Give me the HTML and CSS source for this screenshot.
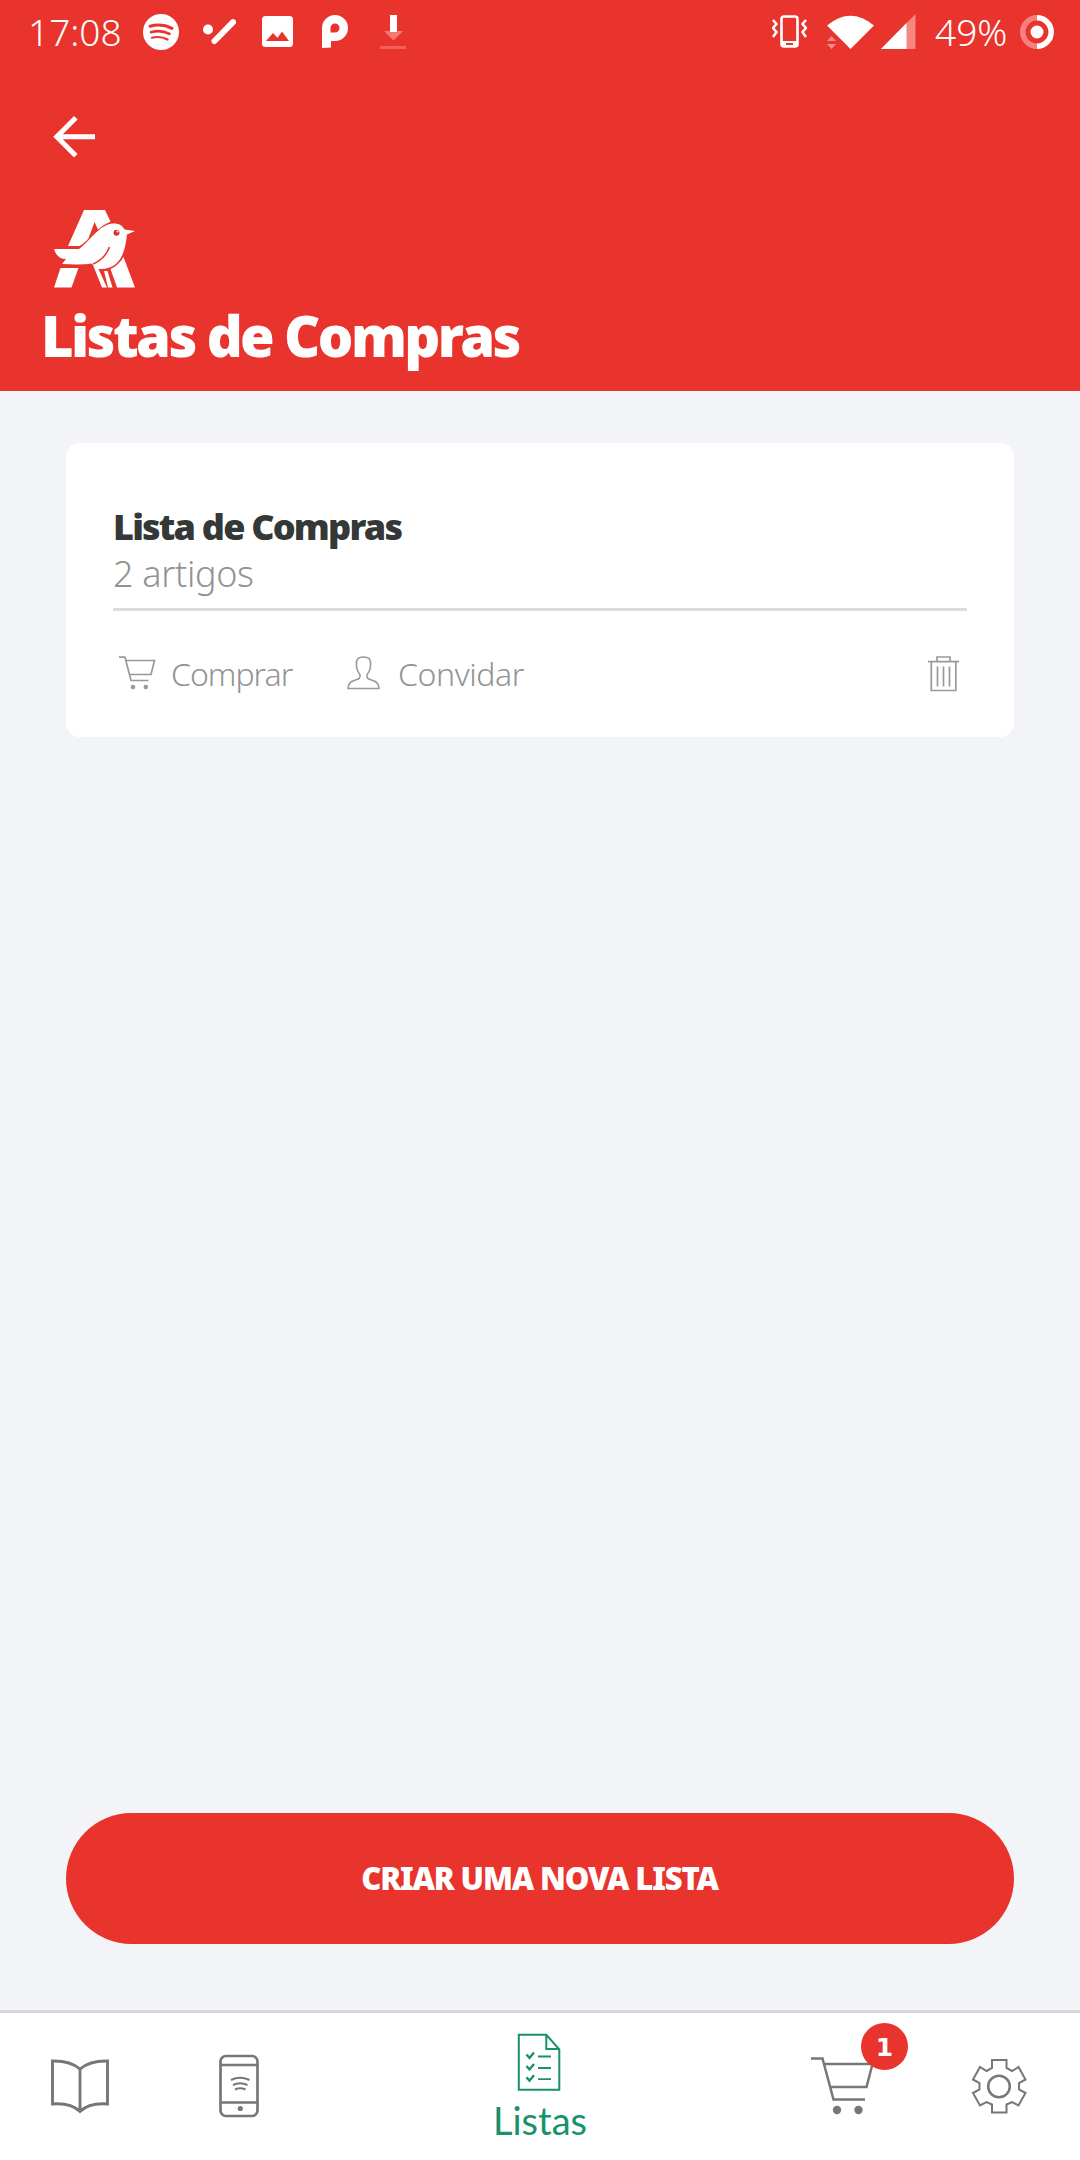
FILE: index.html
```html
<!DOCTYPE html>
<html lang="pt">
<head>
<meta charset="utf-8">
<title>Listas de Compras</title>
<link rel="stylesheet" href="styles.css">
</head>
<body>
<div class="app">
  <header class="header">
    <div class="status">
      <div class="status-group">
        <span class="status-text clock">17:08</span>
        <svg class="spotify" width="36" height="36" viewBox="0 0 36 36"><circle cx="18" cy="18" r="18" fill="#fff"/><g fill="none" stroke="#e8342d" stroke-linecap="round"><path d="M7 12.3q11.500-3.300 22 2" stroke-width="3"/><path d="M8 18.200q10-2.700 18.500 1.700" stroke-width="2.600"/><path d="M9 23.700q8.500-2 15.500 1.800" stroke-width="2.200"/></g></svg>
        <svg class="tick" width="34" height="26" viewBox="0 0 34 26"><circle cx="5" cy="10.500" r="5" fill="#fff"/><path d="M11.500 22 30 3.200" stroke="#fff" stroke-width="6" stroke-linecap="round"/></svg>
        <svg class="photo" width="31" height="31" viewBox="0 0 31 31"><rect width="31" height="31" rx="3.500" fill="#fff"/><path d="M4 25 11 17l4.500 4.800L20 15.500 27 25z" fill="#e8342d"/></svg>
        <svg class="parking" width="26" height="33" viewBox="0 0 26 33"><path fill="#fff" fill-rule="evenodd" d="M0 33V13a13 13 0 1 1 13 13H9v6.500zM13 8.500a4.500 4.500 0 0 0-4.500 4.500v4.500H13a4.500 4.500 0 0 0 0-9z"/></svg>
        <svg class="download" width="28" height="36" viewBox="0 0 28 36"><path d="M5 17h19l-9.500 9.500z" fill="#f37972"/><path d="M11 1h7v17h-7z" fill="#fff"/><path d="M1 33.500h26" stroke="#f1615a" stroke-width="3"/></svg>
      </div>
      <div class="status-group">
        <svg width="35" height="34" viewBox="772 15 35 34"><rect x="781.500" y="16.500" width="16" height="30" rx="2.500" fill="none" stroke="#fff" stroke-width="2.600"/><path d="M782 41h15v6h-15z" fill="#fff"/><path d="M786 44h7" stroke="#e8342d" stroke-width="2"/><path d="m773 20 3.500 4-3.500 4 3.500 4-3.500 5M806 20l-3.500 4 3.500 4-3.500 4 3.500 5" fill="none" stroke="#fff" stroke-width="2.500"/></svg>
        <svg class="wifi" width="47" height="34" viewBox="827 14 47 34"><path d="M827 24.500q23.500-19.500 47 0L850.500 48z" fill="#fff"/><path d="m827 40 4.500-5 4.500 5zm0 3h9l-4.500 5z" fill="#f48c86"/></svg>
        <svg class="signal" width="35" height="35" viewBox="881 14 35 35"><path d="M881 49 915.500 14v35z" fill="#f58680"/><path d="M881 49l25.500-26v26z" fill="#fff"/></svg>
        <span class="status-text percent">49%</span>
        <svg width="34" height="34" viewBox="0 0 34 34"><circle cx="17" cy="17" r="6.500" fill="#fff"/><path d="M17 2.800a14.200 14.200 0 0 0 0 28.400" fill="none" stroke="#f5827c" stroke-width="5.500"/><path d="M17 2.800a14.200 14.200 0 0 1 0 28.400" fill="none" stroke="#fff" stroke-width="5.500"/></svg>
      </div>
    </div>
    <svg class="back" width="42" height="42" viewBox="0 0 42 42" fill="none" stroke="#fff" stroke-width="5"><path d="M42 20.800H4M22.800 1.800 3.800 20.800l19 19"/></svg>
    <svg class="logo" width="82" height="78" viewBox="54 210 82 78">
      <path fill="#fff" d="M84 210h21l5.500 11.500q-6 2.500-12.500 8l-3.500-7.500-6 16.500q-5 5.500-9 7.500H68zM60.500 268h18l-7 19.500H54zM123.500 257l11.500 30.500h-18l-6.500-18.500q8-3.500 13-12z"/>
      <path fill="#fff" d="M54 249h25c9-6 20-24 33-25.500 6-.500 10.500 1.500 12.500 6l10.500 1.500-8 3.500c-2 19-7 34-26 34.500h-2.500l8.500 18.500h-5L93 265l-1.500-1.500Q83 265 62 264l4-5c-7 0-10-4-12-10zM104 271h3.500l5 16.500H108z"/>
      <path d="M109.500 247q-4.500 12-16.500 17" fill="none" stroke="#e9332d" stroke-width="1.500"/>
      <circle cx="116.500" cy="232.800" r="3" fill="#d9302a"/><circle cx="117.500" cy="231.500" r="1" fill="#fff"/>
    </svg>
    <h1 class="title">Listas de Compras</h1>
  </header>
  <main class="content">
    <section class="card">
      <h2 class="card-title">Lista de Compras</h2>
      <p class="card-count">2 artigos</p>
      <div class="actions">
        <svg class="buy-icon" width="37" height="34" viewBox="0 0 37 34"><path d="M0 1.200h6l6 23.300h17.500M7 4.500h28.500l-3.500 14H10.500" fill="none" stroke="#999" stroke-width="1.700"/><circle cx="14" cy="31" r="2.300" fill="#999"/><circle cx="26.800" cy="31" r="2.300" fill="#999"/></svg>
        <span class="buy">Comprar</span>
        <svg class="invite-icon" width="33" height="34" viewBox="0 0 33 34"><path d="M16.500 1C10 1 8.800 4.500 9.500 10c.500 4 1.500 6.500 3.500 8.500.500 5-2 4.500-6 6-4.500 1.500-6 3.500-6 8h31c0-4.500-1.500-6.500-6-8-4-1.500-6.500-1-6-6 2-2 3-4.500 3.500-8.500.700-5.500-.500-9-7-9z" fill="none" stroke="#999" stroke-width="1.600"/></svg>
        <span class="invite">Convidar</span>
        <svg class="trash" width="31" height="36" viewBox="0 0 31 36"><path d="M0 5.700h31M9 5V1h13v4M3.300 6v28.500h24.500V6M9.500 10.500v20M15.500 10.500v20M21.500 10.500v20" fill="none" stroke="#999" stroke-width="1.700"/></svg>
      </div>
    </section>
    <button class="create"><span>CRIAR UMA NOVA LISTA</span></button>
  </main>
  <nav class="nav">
    <a class="tab"><svg class="book" width="60" height="56" viewBox="50 2058 60 56"><path d="M80 2069q-10-8.500-27.500-8v43q18-1.500 27.500 7.500 9.500-9 27.500-7.500v-43q-17.500-.500-27.500 8zv42" fill="none" stroke="#777" stroke-width="2.900"/></svg></a>
    <a class="tab"><svg class="phone" width="40" height="64" viewBox="218 2054 40 64"><g fill="none" stroke="#777" stroke-width="2.700"><rect x="219.500" y="2056" width="37" height="60" rx="5.500"/><path d="M220 2065h37M220 2102.500h37"/><path d="M230 2080q9-4.500 18.500 0M232 2085q7-3.500 14.500 0M234 2089.500q5-2.500 10.500 0" stroke-width="2"/></g><circle cx="239.300" cy="2108.500" r="2.600" fill="#777"/></svg></a>
    <a class="tab active"><svg class="doc" width="44" height="58" viewBox="517 2033 44 58"><path d="M518.800 2034.800h27.500l13 14.500v40.500h-40.500zM546.300 2034.800v14.200h13" fill="none" stroke="#19916a" stroke-width="2"/><path d="M538 2056.500h13M538 2068h13M538 2079.200h13" stroke="#19916a" stroke-width="1.800"/><path d="m526.500 2054.500 3 3.500 4.500-5.500m-7.500 13.500 3 3.500 4.500-5.500m-7.500 13.200 3 3.500 4.500-5.500" fill="none" stroke="#19916a" stroke-width="2.400"/></svg><span class="tab-label">Listas</span></a>
    <a class="tab"><span class="cart-wrap"><svg width="62" height="58" viewBox="810 2058 62 58"><path d="M810 2059.500h11.500l11 41H864M824 2065h47.500l-6 23H829.500" fill="none" stroke="#777" stroke-width="2.500"/><circle cx="836" cy="2111" r="4.200" fill="#777"/><circle cx="857.500" cy="2111" r="4.200" fill="#777"/></svg><b class="badge">1</b></span></a>
    <a class="tab"><svg class="gear" width="56" height="57" viewBox="971 2058 56 57"><g fill="none" stroke="#777"><path stroke-width="2" d="M992 2060h14.500v8l5.500 3 6.500-4 7 12.500-6.500 3.500v6.500l6.500 3.500-7 12.500-6.500-3.500-5.500 2.500v8H992v-8l-5.500-2.500-6.500 3.500-7-12.500 6.500-3.500v-6.500l-6.500-3.500 7-12.500 6.500 4 5.500-3z"/><circle cx="999" cy="2086.500" r="10.800" stroke-width="2.500"/></g></svg></a>
  </nav>
</div>
</body>
</html>
```
FILE: styles.css
```css
* { box-sizing: border-box; }
body { margin: 0; background: #f2f4f8; font-family: "Noto Sans", sans-serif; }
h1, h2, p { margin: 0; }
svg { display: block; flex: none; }
.app { width: 1080px; height: 2160px; display: flex; flex-direction: column; }

.header { height: 391px; background: #e9332d; color: #fff; }
.status { height: 63px; padding: 0 26px 0 28px; display: flex; justify-content: space-between; }
.status-group { display: flex; align-items: center; }
.status-text { font-size: 37px; font-weight: 350; line-height: 63px; white-space: nowrap; }
.clock { width: 115px; }
.tick { margin-left: 24px; }
.photo { margin-left: 25px; }
.parking { margin-left: 29px; }
.download { margin-left: 31px; }
.wifi { margin-left: 20px; }
.signal { margin-left: 7px; }
.percent { width: 85px; padding-left: 19px; margin-right: 19px; }
.back { margin: 53px 0 0 53px; }
.logo { margin: 52px 0 0 54px; }
.title { margin: 12px 0 0 41px; font-size: 56px; font-weight: 900; line-height: 70px; letter-spacing: -2.6px; white-space: nowrap; }

.content { flex: 1; display: flex; flex-direction: column; justify-content: space-between; padding: 52px 66px 66px; }
.card { height: 294px; padding: 61px 47px 0; border-radius: 14px; background: #fff; }
.card-title { font-size: 36px; font-weight: 900; line-height: 46px; letter-spacing: -1.8px; color: #343837; white-space: nowrap; }
.card-count { height: 61px; border-bottom: 3px solid #dcdcdc; font-size: 36px; font-weight: 350; line-height: 48px; letter-spacing: -0.35px; color: #939393; }
.actions { height: 124px; display: flex; align-items: center; color: #939393; font-size: 32px; font-weight: 350; }
.buy-icon { margin-left: 6px; }
.buy { width: 120px; margin-left: 15px; letter-spacing: -1px; }
.invite-icon { margin-left: 56px; }
.invite { margin-left: 18px; letter-spacing: -0.4px; }
.trash { margin: 2px 8px 0 auto; }
.create { height: 131px; border: 0; border-radius: 66px; background: #e9332d; color: #fff; font: 900 31px/40px "Noto Sans", sans-serif; letter-spacing: -1.15px; padding: 0 1px 2px 0; white-space: nowrap; }

.nav { height: 150px; display: grid; grid-template-columns: 159px 159px 444px 159px 159px; border-top: 3px solid #d6d6db; background: #fff; }
.tab { display: flex; flex-direction: column; align-items: center; justify-content: center; padding: 0 0 1px 1px; }
.active { justify-content: flex-start; padding: 20px 0 0; color: #19916a; }
.doc { margin-right: 2px; }
.tab-label { font: 400 38px/52px Lato, sans-serif; margin-top: 3px; }
.cart-wrap { position: relative; }
.badge { position: absolute; left: 50px; top: -34px; width: 47px; height: 47px; border-radius: 50%; background: #e9332d; color: #fff; font: 700 25px/49px "DejaVu Sans", sans-serif; text-align: center; }
.gear { margin-right: 4px; }
```
